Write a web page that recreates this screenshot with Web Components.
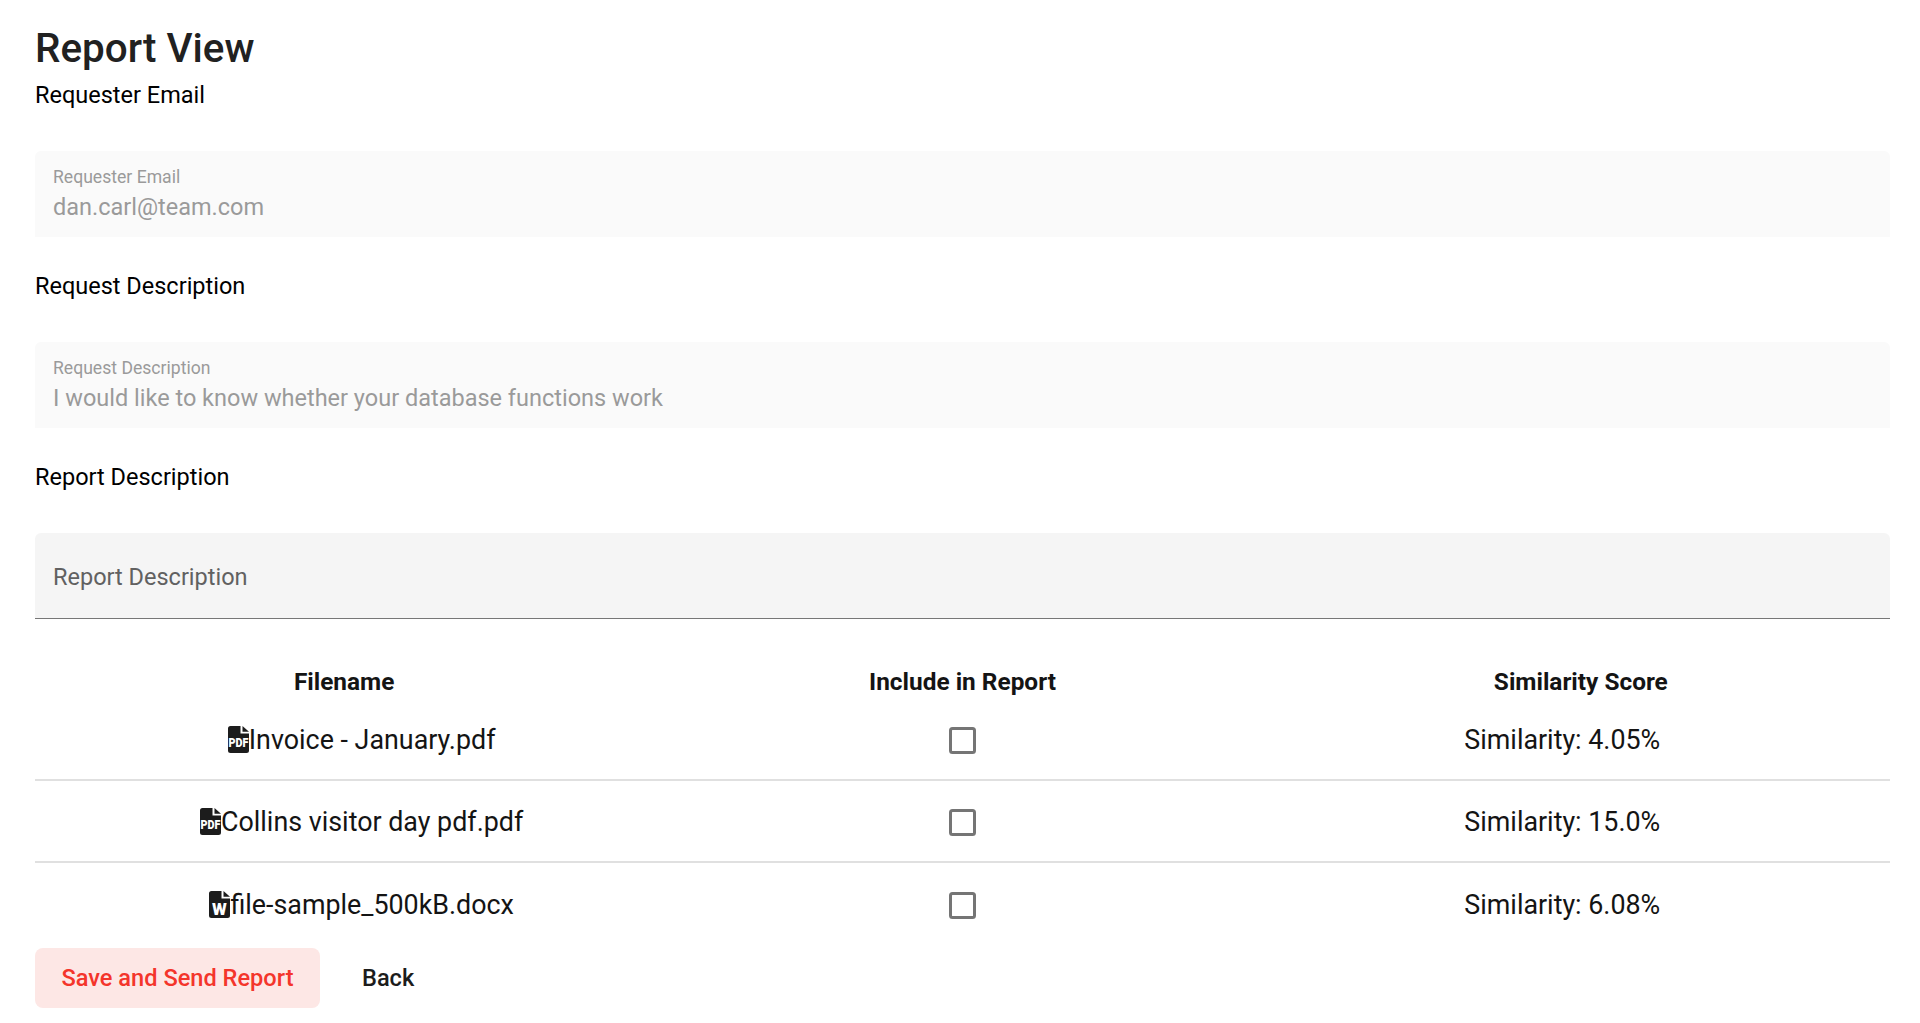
<!DOCTYPE html>
<html lang="en"><head><meta charset="utf-8"><title>Report View</title>
<style>
html,body{margin:0;padding:0;background:#fff}
body{font-family:Roboto,"Liberation Sans",sans-serif;color:#000}
</style></head>
<body>
<report-view>
  <rv-form-block label="Requester Email" field-label="Requester Email" value="dan.carl@team.com"></rv-form-block>
  <rv-form-block label="Request Description" field-label="Request Description" value="I would like to know whether your database functions work"></rv-form-block>
  <rv-form-block label="Report Description" placeholder="Report Description"></rv-form-block>
  <rv-file-table>
    <rv-file-row type="pdf" name="Invoice - January.pdf" score="Similarity: 4.05%"></rv-file-row>
    <rv-file-row type="pdf" name="Collins visitor day pdf.pdf" score="Similarity: 15.0%"></rv-file-row>
    <rv-file-row type="word" name="file-sample_500kB.docx" score="Similarity: 6.08%" last></rv-file-row>
  </rv-file-table>
  <rv-actions></rv-actions>
</report-view>
<script>
function def(name, html, init){
  customElements.define(name, class extends HTMLElement{
    connectedCallback(){
      if(this.shadowRoot) return;
      const r=this.attachShadow({mode:'open'});
      r.innerHTML=html;
      if(init) init.call(this,r);
    }
  });
}
def('report-view',`<style>
:host{display:block;padding:0 30px 15px 35px;box-sizing:border-box;height:1023px;overflow:hidden}
h1{margin:0;height:75px;box-sizing:border-box;padding-top:26px;font:500 40.4px/46px Roboto,sans-serif;color:#212121;letter-spacing:0}
</style><h1>Report View</h1><slot></slot>`);
def('rv-form-block',`<style>
:host{display:block;margin-bottom:29px}
.l{height:40px;font:400 23.5px/40px Roboto,sans-serif;color:#000;margin-bottom:36px}
.f{height:86px;box-sizing:border-box;border-radius:6px 6px 0 0;background:#fafafa;padding:0 18px 2px;display:flex;flex-direction:column;justify-content:center}
.s{font:400 17.6px/22px Roboto,sans-serif;color:#9a9a9a;margin-bottom:3px;padding-top:2px}
.v{font:400 23.5px/32px Roboto,sans-serif;color:#9a9a9a}
.f.a{background:#f5f5f5;border-bottom:1px solid #777;padding:2px 18px 0}
.f.a .v{color:#616161}
</style><div class="l"></div><div class="f"><div class="s"></div><div class="v"></div></div>`,function(r){
  r.querySelector('.l').textContent=this.getAttribute('label');
  const ph=this.getAttribute('placeholder');
  if(ph){r.querySelector('.f').classList.add('a');r.querySelector('.s').remove();r.querySelector('.v').textContent=ph;}
  else{r.querySelector('.s').textContent=this.getAttribute('field-label');r.querySelector('.v').textContent=this.getAttribute('value');}
});
def('rv-file-table',`<style>
:host{display:block;margin-top:-5px}
.h{display:grid;grid-template-columns:repeat(3,1fr);height:56px;box-sizing:border-box;padding-top:21px;align-items:center;text-align:center;font:700 24.4px/32px Roboto,sans-serif;color:#141414}
</style><div class="h"><div>Filename</div><div>Include in Report</div><div>Similarity Score</div></div><slot></slot>`);
const body=`<path d="M2.5 0H12.500v7.500h8.500v17a2.500 2.500 0 0 1-2.500 2.500h-16A2.500 2.500 0 0 1 0 24.500V2.500A2.500 2.500 0 0 1 2.500 0Z" fill="#1c1c1c"/><path d="M14.500 0l6.500 5.800h-6.500Z" fill="#1c1c1c"/>`;
const pdf=`<svg width="21" height="27" viewBox="0 0 21 27" overflow="visible">${body}<text transform="translate(10.500 21) scale(.8 1)" text-anchor="middle" font-family="Roboto,sans-serif" font-weight="900" font-size="13.500" fill="#fff">PDF</text></svg>`;
const word=`<svg width="21" height="27" viewBox="0 0 21 27" overflow="visible">${body}<text x="10.500" y="23.500" text-anchor="middle" font-family="Roboto,sans-serif" font-weight="900" font-size="17" fill="#fff">W</text></svg>`;
def('rv-file-row',`<style>
:host{display:grid;grid-template-columns:repeat(3,1fr);height:82px;box-sizing:border-box;border-bottom:2px solid #e0e0e0;align-items:center;text-align:center;font:400 26.85px/34px Roboto,sans-serif;color:#141414}
:host([last]){border-bottom:0}
.n{display:flex;justify-content:center;align-items:center;padding-left:35px}
svg{display:block;flex:none}
.t{position:relative;top:1px}
.c{width:27px;height:27px;border:3.5px solid #757575;border-radius:3.5px;box-sizing:border-box;margin:2px auto 0}
.s{padding-right:37px;padding-top:1px}
</style><div class="n"><span class="i"></span><span class="t"></span></div><div><div class="c" role="checkbox" aria-checked="false"></div></div><div class="s"></div>`,function(r){
  r.querySelector('.i').innerHTML=this.getAttribute('type')==='word'?word:pdf;
  r.querySelector('.t').textContent=this.getAttribute('name');
  r.querySelector('.s').textContent=this.getAttribute('score');
});
def('rv-actions',`<style>
:host{display:flex;align-items:center;gap:16px;margin-top:3px}
button{all:unset;box-sizing:border-box;height:60px;padding:0 26px;font:500 23.6px/60px Roboto,sans-serif;border-radius:8px;color:#1c1c1c}
.p{background:#fde7e5;color:#f4352b;width:285px;text-align:center;padding:0}
</style><button class="p">Save and Send Report</button><button>Back</button>`);
</script>
</body></html>
